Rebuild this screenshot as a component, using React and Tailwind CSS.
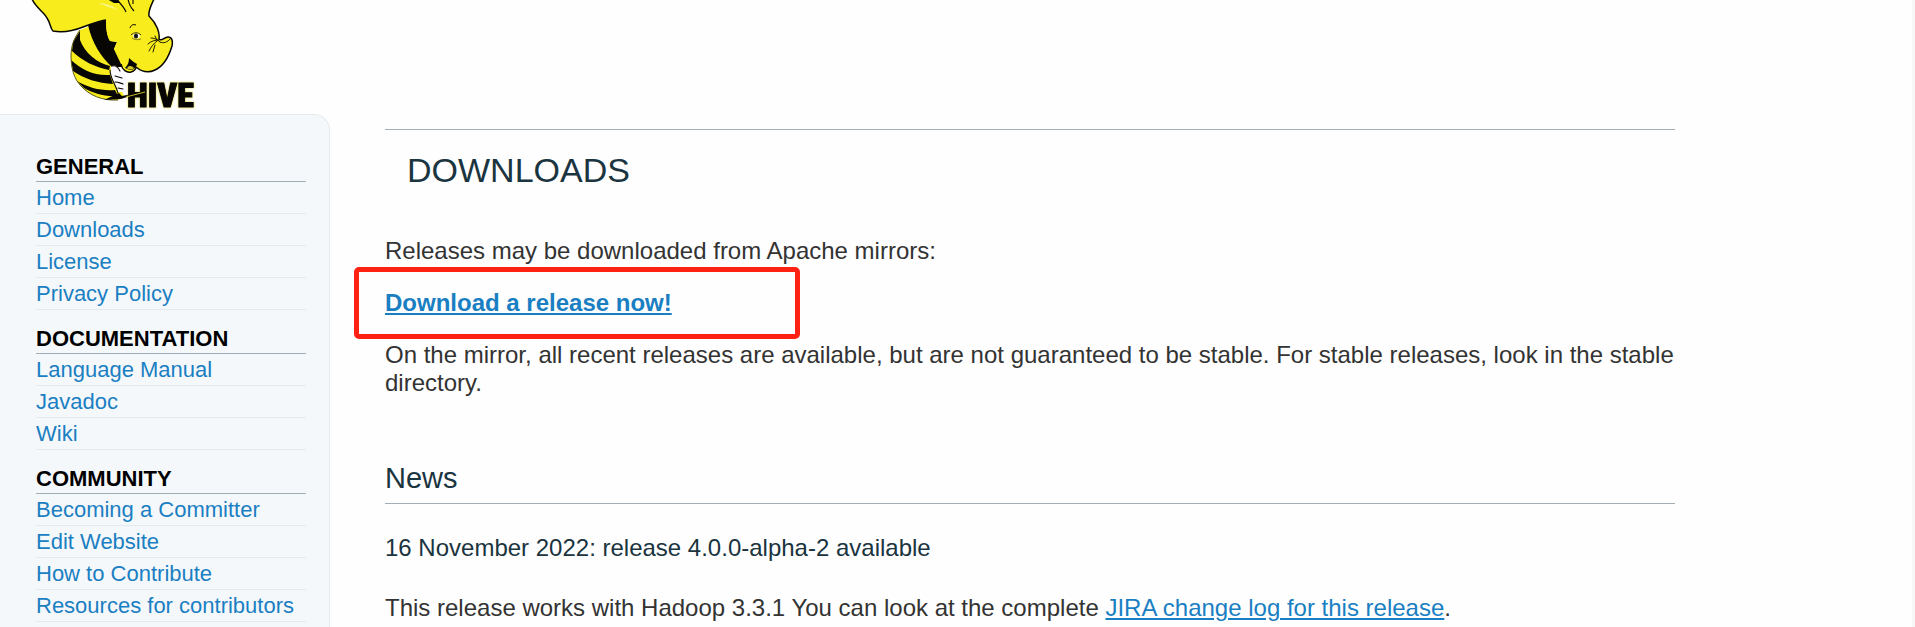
const menu = [
  { title: 'General', links: ['Home', 'Downloads', 'License', 'Privacy Policy'] },
  { title: 'Documentation', links: ['Language Manual', 'Javadoc', 'Wiki'] },
  {
    title: 'Community',
    links: ['Becoming a Committer', 'Edit Website', 'How to Contribute', 'Resources for contributors'],
  },
]

function HiveLogo() {
  return (
    <svg viewBox="28 0 170 114" className="block h-[114px] w-[170px] overflow-visible" role="img" aria-label="Apache Hive">
      {/* striped body */}
      <path d="M80 30 C74 38 71 46 71 56 C71 68 74 79 81 86 C89 95 102 101 118 100 L124 96 L112 70 L122 66 L106 20 Z" fill="#f8ec1c" />
      <path d="M88 25 L106 20 C106 29 107 36 110 41 L117 42 L114 49 L123 67 L112 67 C101 57 92 43 88 25 Z" fill="#070603" />
      <path d="M80 31 L73 42 L72 51 C82 61 95 67 109 70 L110 66 C97 63 85 53 80 40 Z" fill="#070603" />
      <path d="M71 60 C82 70 94 76 110 75 L113 84 C98 83 84 79 73 71 Z" fill="#070603" />
      <path d="M77 81 C89 88 101 91 115 90 L118 96 C104 97 93 93 84 88 Z" fill="#070603" />
      <path d="M80 30 C74 38 71 46 71 56 C71 68 74 79 81 86 C89 95 102 101 118 100" fill="none" stroke="#5a5618" strokeWidth="1" />
      {/* head, ear and trunk */}
      <path
        d="M32 -1 C36 8 44 12 47 18 C51 24 50 28 53 31 C63 33 73 31 83 27 C91 24 99 21 106 20 C106 29 107 36 110 41 L117 42 L114 49 L121 64 C122 70 127 73 131 72 C134 71 136 69 136 67 C142 72 149 73 155 70 C164 66 169 56 172 46 C173 41 172 37 168 37 C164 37 162 42 159 39 C160 33 157 24 149 16 C148 10 152 4 154 -1 Z"
        fill="#f8ec1c"
      />
      <path
        d="M32 -1 C36 8 44 12 47 18 C51 24 50 28 53 31 C63 33 73 31 83 27 C91 24 99 21 106 20 M121 64 C122 70 127 73 131 72 C134 71 136 69 136 67 C142 72 149 73 155 70 C164 66 169 56 172 46 C173 41 172 37 168 37 C164 37 162 42 159 39 C160 33 157 24 149 16 C148 10 152 4 154 -1"
        fill="none"
        stroke="#070603"
        strokeWidth="1.5"
        strokeLinejoin="round"
      />
      <path d="M98 3 C106 3 113 6 118 10 C112 8 105 6 98 3 Z" fill="#fbf383" />
      {/* brow folds between the ears */}
      <path d="M107 -1 L114 3 L120 3 L118 -1 Z" fill="#070603" />
      <path d="M118 1 C121 4 124 7 126 12 M128 -1 C129 4 131 8 134 11 M133 -1 L133 4" fill="none" stroke="#070603" strokeWidth="1.1" />
      {/* eye */}
      <path d="M130 28 C131 25 133 24 136 25" fill="none" stroke="#070603" strokeWidth="1" />
      <ellipse cx="136.5" cy="36" rx="3.4" ry="2.4" fill="#fff" />
      <path d="M131 35 C134 32 138 32 141 35" fill="none" stroke="#3c390c" strokeWidth="1" />
      <ellipse cx="136" cy="36" rx="2.1" ry="2.6" fill="#15151c" />
      <path d="M132 38 C135 40 138 40 141 39" fill="none" stroke="#6d6610" strokeWidth="0.8" />
      {/* trunk creases */}
      <path
        d="M151 38 C154 38 157 39 160 42 M148 44 C151 41 155 40 159 40 M149 51 C151 47 154 43 157 41 M153 52 L155 45 M155 36 L157 40 M160 42 C163 44 168 42 170 39"
        fill="none"
        stroke="#070603"
        strokeWidth="0.9"
        strokeLinecap="round"
      />
      {/* mouth */}
      <path d="M129 58 C132 61 135 63 137 64 C136 68 133 70 130 70 L125 68 C128 65 129 62 129 58 Z" fill="#070603" />
      <path d="M127 68 C129 65 132 66 134 68 C132 70 129 70 127 68 Z" fill="#cfc62a" />
      {/* glove */}
      <path d="M111 67 C114 64 118 66 120 71 C124 72 128 75 128 80 L128 92 L118 92 C117 84 109 80 111 67 Z" fill="#fbfaff" />
      <path
        d="M110 70 C110 78 115 83 118 93 M112 66 C115 65 118 67 120 71 M115 76 L122 78 M115 82 C118 82 120 83 123 84 M118 88 L123 89"
        fill="none"
        stroke="#070603"
        strokeWidth="1.1"
        strokeLinecap="round"
      />
      {/* stinger */}
      <path d="M104 100 L119 93 L122 96 L145 91 L121 99 Z" fill="#070603" />
      <text
        x="127"
        y="107"
        className="drop-shadow-[0_0_1px_#e0d520]"
        fontFamily="'Roboto Condensed', 'Liberation Sans Narrow', 'Liberation Sans', sans-serif"
        fontSize="34"
        fontWeight="900"
        fill="#070603"
        stroke="#070603"
        strokeWidth="1"
      >
        HIVE
      </text>
      <path d="M126 97 L145 92" stroke="#d8cf2a" strokeWidth="0.9" />
    </svg>
  )
}

export default function App() {
  return (
    <div className="flex min-h-screen items-stretch border-r-3 border-[#f7f7f7] bg-[#fefefe] font-['Liberation_Sans',Arial,sans-serif] text-2xl/7 text-[#333333]">
      <div className="flex w-[330px] shrink-0 flex-col">
        <a href="#home" className="ml-7 w-fit"><HiveLogo /></a>
        <nav className="flex-1 rounded-tr-2xl border-t border-r border-[#e4eaed] bg-[#f5f8fb] pt-[35px] pr-[23px] pl-9 text-[22px]">
          {menu.map((s) => (
            <section key={s.title} className="mb-3 last:mb-0">
              <h2 className="border-b border-[#a0aeb6] pt-1 pb-px text-[22px]/[26px] font-bold text-black uppercase">{s.title}</h2>
              <ul>
                {s.links.map((l) => (
                  <li key={l} className="border-b border-[#e4e9ed] pt-px leading-[30px]">
                    <a href="#page" className="text-[#1a7fc2]">{l}</a>
                  </li>
                ))}
              </ul>
            </section>
          ))}
        </nav>
      </div>
      <main className="flex-1 pt-[129px] pr-[237px] pl-[55px]">
        <h1 className="border-t border-[#a0aeb6] pt-5 pl-[22px] text-[34px]/10 text-[#1a3440]">DOWNLOADS</h1>
        <p className="mt-[47px]">Releases may be downloaded from Apache mirrors:</p>
        <p className="relative mt-6">
          <a href="#release" className="font-bold text-[#1a7fc2] underline">Download a release now!</a>
          <span className="pointer-events-none absolute -top-[22px] -left-[31px] h-[72px] w-[446px] rounded-[5px] border-5 border-[#ff2112]" />
        </p>
        <p className="mt-6">On the mirror, all recent releases are available, but are not guaranteed to be stable. For stable releases, look in the stable directory.</p>
        <h2 className="mt-[63px] border-b border-[#a0aeb6] pb-[7px] text-[29px]/9 text-[#1a3440]">News</h2>
        <h3 className="mt-[30px] text-[#1a3440]">16 November 2022: release 4.0.0-alpha-2 available</h3>
        <p className="mt-8">
          This release works with Hadoop 3.3.1 You can look at the complete{' '}
          <a href="#changelog" className="text-[#1a7fc2] underline">JIRA change log for this release</a>.
        </p>
      </main>
    </div>
  )
}
